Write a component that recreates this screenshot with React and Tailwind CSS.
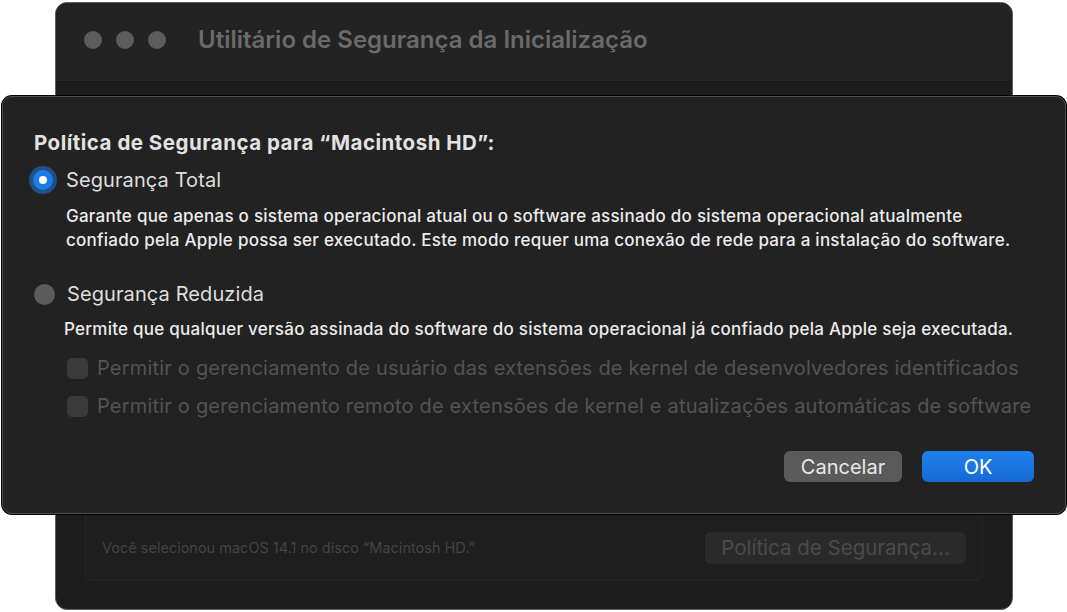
import React from 'react';

const font = { fontFamily: 'Inter, "Liberation Sans", sans-serif' };

function Radio({ checked }) {
  if (checked) {
    return (
      <span className="flex h-[20px] w-[20px] shrink-0 items-center justify-center rounded-full bg-[#1f7ae6] shadow-[0_0_0_4px_rgba(28,98,170,0.75)]">
        <span className="h-[8px] w-[8px] rounded-full bg-white" />
      </span>
    );
  }
  return <span className="h-[21px] w-[21px] shrink-0 rounded-full bg-[#5c5c5c]" />;
}

function Checkbox({ label }) {
  return (
    <div className="flex h-[24px] items-center gap-[9px]">
      <span className="h-[21px] w-[21px] shrink-0 rounded-[5px] bg-[#3a3a3a]" />
      <span className="text-[20px] leading-[24px] tracking-[0.2px] text-[#535353]">{label}</span>
    </div>
  );
}

export default function App() {
  return (
    <div className="relative h-[612px] w-[1067px] overflow-hidden bg-white" style={font}>
      {/* background window */}
      <div className="absolute left-[55px] top-[2px] flex h-[608px] w-[958px] flex-col overflow-hidden rounded-[12px] border border-[#5e5e5e] bg-[#1c1c1c]">
        <div className="flex h-[79px] items-center border-b border-[#181818] bg-[#232323] pb-[4px] pl-[28px]">
          <div className="flex gap-[14px]">
            <span className="h-[18px] w-[18px] rounded-full bg-[#5d5d5d]" />
            <span className="h-[18px] w-[18px] rounded-full bg-[#5d5d5d]" />
            <span className="h-[18px] w-[18px] rounded-full bg-[#5d5d5d]" />
          </div>
          <span className="ml-[32px] text-[24px] font-semibold text-[#6a6a6a]">
            Utilitário de Segurança da Inicialização
          </span>
        </div>
        <div className="flex-1" />
        <div className="mx-[29px] mb-[28px] flex h-[90px] items-end rounded-[6px] border border-[#262626] bg-[#1e1e1e] px-[16px] pb-[16px]">
          <div className="flex w-full items-center justify-between">
            <span className="text-[14.5px] text-[#444444]">Você selecionou macOS 14.1 no disco “Macintosh HD.”</span>
            <span className="flex h-[32px] w-[261px] items-center justify-center rounded-[6px] bg-[#2a2a2a] text-[20.5px] text-[#4a4a4a]">
              Política de Segurança...
            </span>
          </div>
        </div>
      </div>

      {/* sheet */}
      <div className="absolute left-[2px] top-[96px] flex h-[418px] w-[1064px] flex-col rounded-[10px] border border-[#4e4e4e] bg-[#222222] px-[31px] pt-[34px] shadow-[0_0_0_1px_#000]">
        <h1 className="text-[20.5px] font-bold leading-[24px] tracking-[0.5px] text-[#e2e2e2]">
          Política de Segurança para “Macintosh HD”:
        </h1>

        <div className="mt-[13px] flex h-[24px] items-center gap-[13px] -ml-[1px]">
          <Radio checked />
          <span className="text-[20px] leading-[24px] tracking-[0.1px] text-[#dedede]">Segurança Total</span>
        </div>
        <p className="mt-[12px] pl-[32px] text-[17px] font-medium leading-[24px] tracking-[0.25px] text-[#ececec]">
          Garante que apenas o sistema operacional atual ou o software assinado do sistema operacional atualmente
          <br />
          confiado pela Apple possa ser executado. Este modo requer uma conexão de rede para a instalação do software.
        </p>

        <div className="mt-[30px] flex h-[24px] items-center gap-[12px]">
          <Radio />
          <span className="text-[20px] leading-[24px] tracking-[0.1px] text-[#dedede]">Segurança Reduzida</span>
        </div>
        <p className="mt-[11px] pl-[30px] text-[17px] font-medium leading-[24px] tracking-[0.25px] text-[#ececec]">
          Permite que qualquer versão assinada do software do sistema operacional já confiado pela Apple seja executada.
        </p>

        <div className="mt-[15px] flex flex-col gap-[14px] pl-[33px]">
          <Checkbox label="Permitir o gerenciamento de usuário das extensões de kernel de desenvolvedores identificados" />
          <Checkbox label="Permitir o gerenciamento remoto de extensões de kernel e atualizações automáticas de software" />
        </div>

        <div className="mt-auto mb-[31px] flex justify-end gap-[20px]">
          <button className="h-[31px] w-[118px] rounded-[6px] bg-[#5a5a5a] text-[20px] text-[#e8e8e8]">Cancelar</button>
          <button className="h-[31px] w-[112px] rounded-[6px] bg-gradient-to-b from-[#1f80ee] to-[#1669d4] text-[20px] text-white">
            OK
          </button>
        </div>
      </div>
    </div>
  );
}
